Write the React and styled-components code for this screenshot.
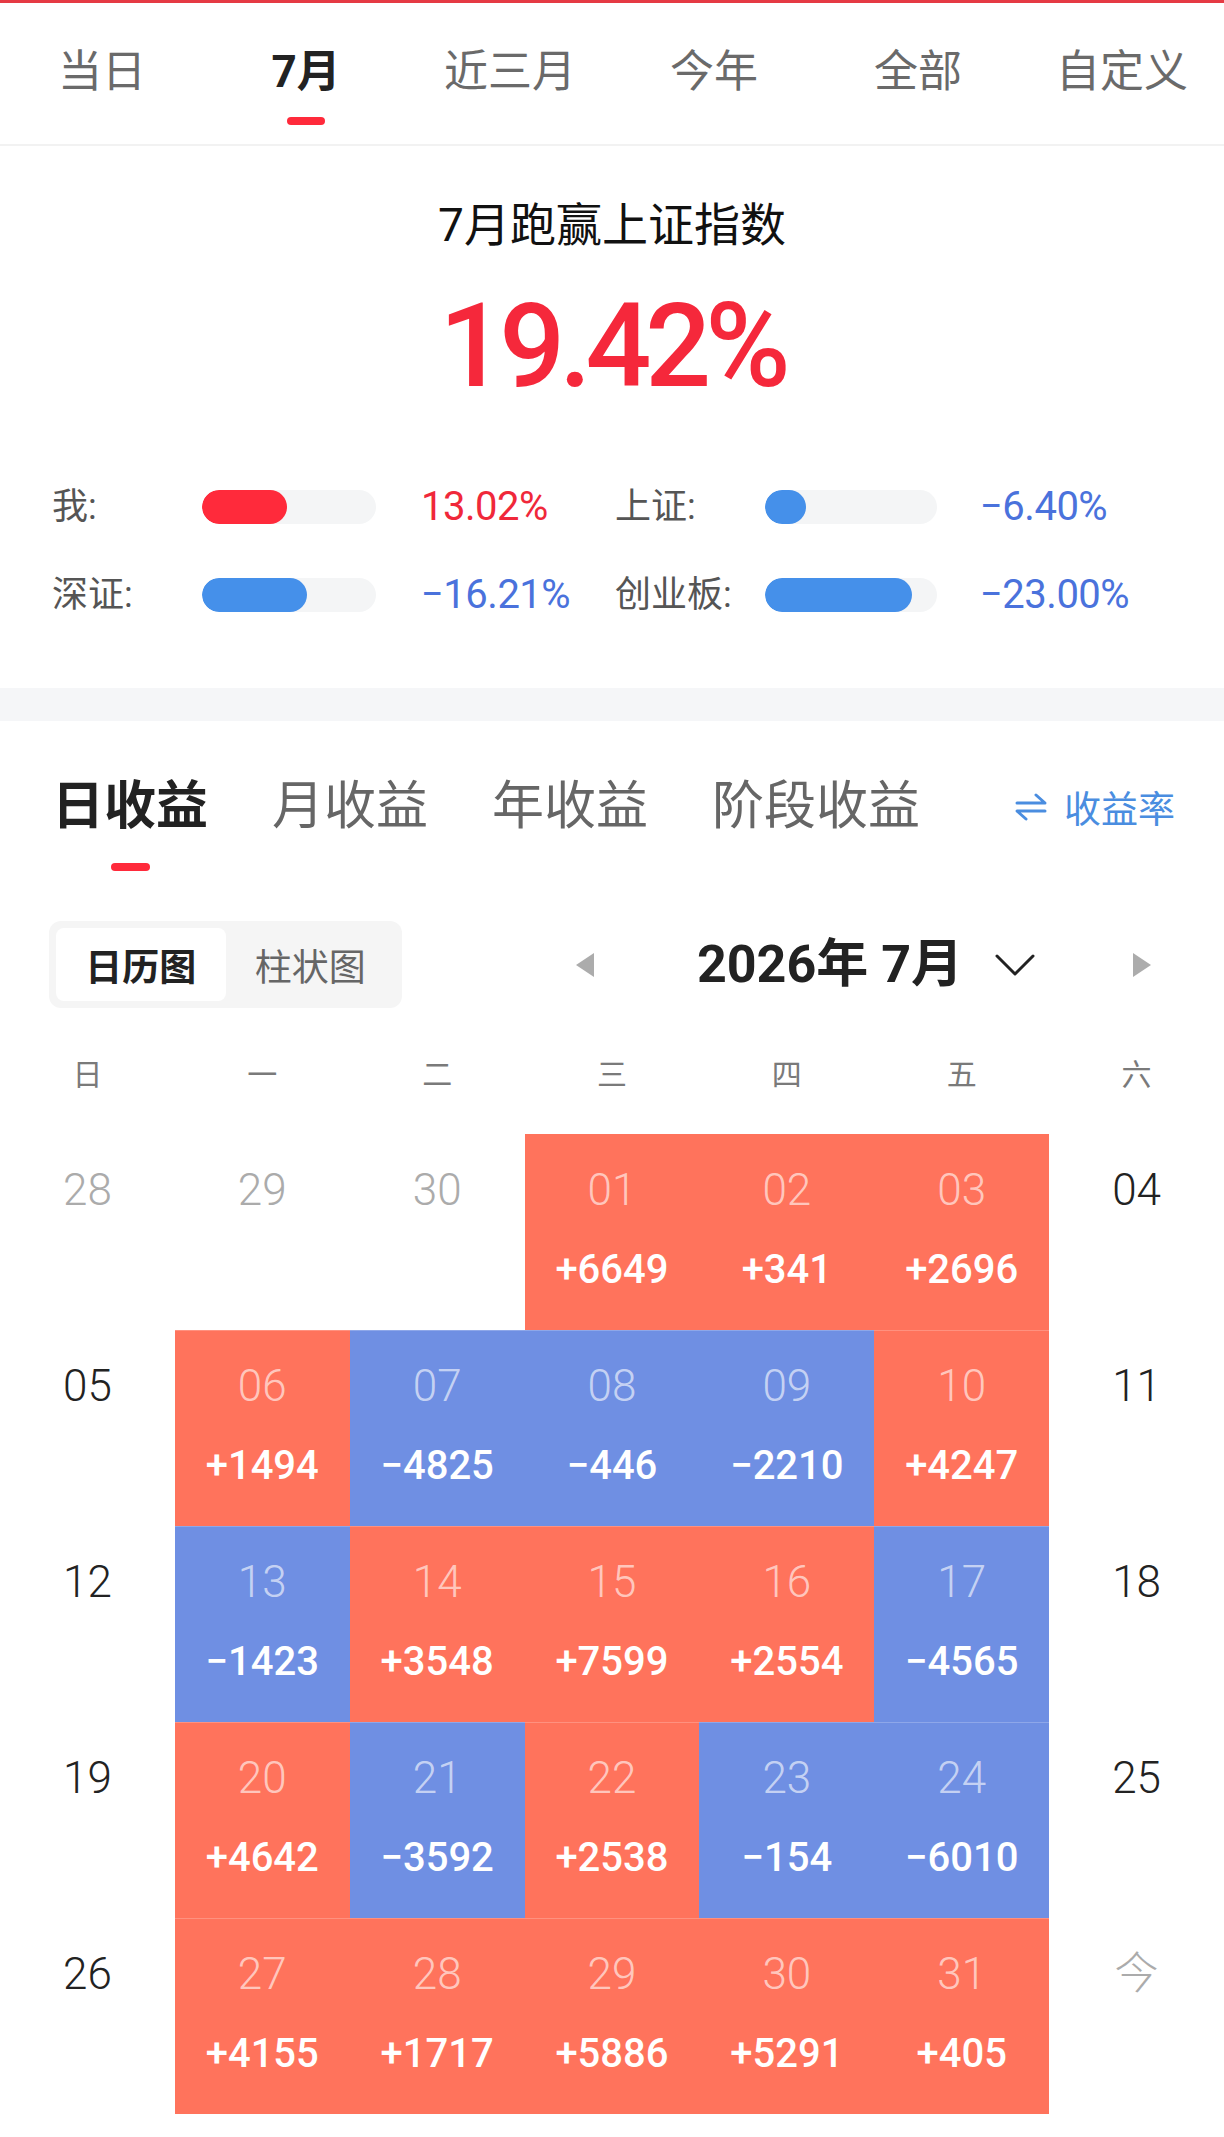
import React from "react";
import styled, { createGlobalStyle } from "styled-components";

const GlobalStyle = createGlobalStyle`
  body {
    margin: 0;
    background: #fff;
  }
`;

const RED = "#ff735c";
const BLUE = "#6f8fe3";

const Page = styled.div`
  width: 1224px;
  background: #fff;
  font-family: Roboto, "Noto Sans CJK SC", sans-serif;
  border-top: 3px solid #e53a44;
`;

const TopTabs = styled.div`
  display: grid;
  grid-template-columns: repeat(6, 1fr);
  height: 141px;
  border-bottom: 2px solid #f2f2f2;
`;

const TopTab = styled.div`
  display: flex;
  flex-direction: column;
  align-items: center;
  padding-top: 47px;
  font-size: 44px;
  line-height: 1;
  color: ${(p) => (p.active ? "#222" : "#6a6a6a")};
  font-weight: ${(p) => (p.active ? 700 : 400)};
`;

const Underline = styled.div`
  width: ${(p) => p.w || 38}px;
  height: 8px;
  border-radius: 4px;
  background: #ff2a3b;
  margin-top: ${(p) => p.gap || 23}px;
`;

const Summary = styled.section`
  padding: 56px 0 63px;
`;

const Title = styled.div`
  text-align: center;
  font-size: 46px;
  line-height: 1;
  font-weight: 400;
  color: #111;
`;

const BigNumber = styled.div`
  margin-top: 40px;
  text-align: center;
  font-size: 116px;
  line-height: 1;
  font-weight: 500;
  letter-spacing: -6px;
  color: #f5283b;
`;

const StatsGrid = styled.div`
  margin-top: 73px;
  padding-left: 52px;
  display: grid;
  grid-template-columns: 563px 563px;
  row-gap: 28px;
`;

const StatItem = styled.div`
  display: flex;
  align-items: center;
  height: 60px;
`;

const StatLabel = styled.div`
  width: 150px;
  font-size: 36px;
  line-height: 1;
  color: #555;
`;

const Track = styled.div`
  width: ${(p) => p.w}px;
  height: 34px;
  border-radius: 17px;
  background: #f4f5f6;
  overflow: hidden;
`;

const Fill = styled.div`
  height: 100%;
  border-radius: 17px;
  background: ${(p) => p.color};
`;

const StatValue = styled.div`
  margin-left: ${(p) => p.gap}px;
  font-size: 40px;
  line-height: 1;
  letter-spacing: -0.5px;
  color: ${(p) => p.color};
`;

const GrayBand = styled.div`
  height: 33px;
  background: #f5f6f8;
`;

const IncomeTabs = styled.div`
  display: flex;
  align-items: flex-start;
  gap: 64px;
  padding: 60px 49px 0 52px;
`;

const IncomeTab = styled.div`
  display: flex;
  flex-direction: column;
  align-items: center;
  font-size: 52px;
  line-height: 1;
  color: ${(p) => (p.active ? "#222" : "#666")};
  font-weight: ${(p) => (p.active ? 700 : 400)};
`;

const RateToggle = styled.div`
  margin-left: auto;
  height: 52px;
  display: flex;
  align-items: center;
  gap: 16px;
  font-size: 37px;
  color: #4a8de0;
`;

const Controls = styled.div`
  margin-top: 50px;
  display: flex;
  align-items: center;
  padding: 0 73px 0 49px;
`;

const Segmented = styled.div`
  width: 353px;
  height: 87px;
  box-sizing: border-box;
  padding: 7px;
  border-radius: 12px;
  background: #f5f5f5;
  display: grid;
  grid-template-columns: 1fr 1fr;
`;

const SegItem = styled.div`
  display: flex;
  align-items: center;
  justify-content: center;
  border-radius: 8px;
  font-size: 37px;
  background: ${(p) => (p.active ? "#fff" : "transparent")};
  color: ${(p) => (p.active ? "#222" : "#666")};
  font-weight: ${(p) => (p.active ? 700 : 400)};
`;

const MonthNav = styled.div`
  margin-left: auto;
  display: flex;
  align-items: center;
`;

const Arrow = styled.div`
  width: 0;
  height: 0;
  border-top: 12px solid transparent;
  border-bottom: 12px solid transparent;
  ${(p) =>
    p.dir === "left"
      ? "border-right: 18px solid #acacac;"
      : "border-left: 18px solid #acacac;"}
`;

const MonthTitle = styled.div`
  margin-left: 103px;
  font-size: 52px;
  line-height: 1;
  font-weight: 700;
  color: #222;
`;

const Chevron = styled.svg`
  margin-left: 31px;
  margin-right: 97px;
`;

const WeekRow = styled.div`
  display: grid;
  grid-template-columns: repeat(7, 1fr);
  padding: 52px 0 44px;
`;

const WeekDay = styled.div`
  text-align: center;
  font-size: 30px;
  line-height: 1;
  color: #7a7a7a;
`;

const Calendar = styled.div`
  display: grid;
  grid-template-columns: repeat(7, 1fr);
  grid-auto-rows: 196px;
  padding-bottom: 23px;
`;

const Cell = styled.div`
  display: flex;
  flex-direction: column;
  align-items: center;
  padding-top: 34px;
  background: ${(p) => p.bg || "transparent"};
  box-shadow: ${(p) =>
    p.bg && p.row > 0 ? "inset 0 1px 0 rgba(255,255,255,0.22)" : "none"};
`;

const DateNum = styled.div`
  font-size: 44px;
  line-height: 1;
  font-weight: 300;
  color: ${(p) => p.color};
`;

const Amount = styled.div`
  margin-top: 38px;
  font-size: 40px;
  line-height: 1;
  font-weight: 500;
  color: #fff;
`;

const topTabs = ["当日", "7月", "近三月", "今年", "全部", "自定义"];
const incomeTabs = ["日收益", "月收益", "年收益", "阶段收益"];
const weekDays = ["日", "一", "二", "三", "四", "五", "六"];

const stats = [
  { label: "我:", w: 174, fill: 85, color: "#ff2a3b", value: "13.02%", vColor: "#f0283a", gap: 45 },
  { label: "上证:", w: 172, fill: 41, color: "#4590ea", value: "−6.40%", vColor: "#4a72dc", gap: 43 },
  { label: "深证:", w: 174, fill: 105, color: "#4590ea", value: "−16.21%", vColor: "#4a72dc", gap: 45 },
  { label: "创业板:", w: 172, fill: 147, color: "#4590ea", value: "−23.00%", vColor: "#4a72dc", gap: 43 },
];

// kind: prev (gray), plain day (black), today, or a traded day with an amount
const days = [
  { d: "28", kind: "prev" }, { d: "29", kind: "prev" }, { d: "30", kind: "prev" },
  { d: "01", v: "+6649" }, { d: "02", v: "+341" }, { d: "03", v: "+2696" }, { d: "04" },
  { d: "05" }, { d: "06", v: "+1494" }, { d: "07", v: "−4825" }, { d: "08", v: "−446" },
  { d: "09", v: "−2210" }, { d: "10", v: "+4247" }, { d: "11" },
  { d: "12" }, { d: "13", v: "−1423" }, { d: "14", v: "+3548" }, { d: "15", v: "+7599" },
  { d: "16", v: "+2554" }, { d: "17", v: "−4565" }, { d: "18" },
  { d: "19" }, { d: "20", v: "+4642" }, { d: "21", v: "−3592" }, { d: "22", v: "+2538" },
  { d: "23", v: "−154" }, { d: "24", v: "−6010" }, { d: "25" },
  { d: "26" }, { d: "27", v: "+4155" }, { d: "28", v: "+1717" }, { d: "29", v: "+5886" },
  { d: "30", v: "+5291" }, { d: "31", v: "+405" }, { d: "今", kind: "today" },
];

function SwapIcon() {
  return (
    <svg width="34" height="30" viewBox="0 0 34 30" fill="none" stroke="#4a8de0" strokeWidth="3" strokeLinecap="round" strokeLinejoin="round">
      <path d="M3 11 H31 L22 3" />
      <path d="M31 19 H3 L12 27" />
    </svg>
  );
}

export default function App() {
  return (
    <Page>
      <GlobalStyle />
      <TopTabs>
        {topTabs.map((t) => (
          <TopTab key={t} active={t === "7月"}>
            {t}
            {t === "7月" && <Underline />}
          </TopTab>
        ))}
      </TopTabs>

      <Summary>
        <Title>7月跑赢上证指数</Title>
        <BigNumber>19.42%</BigNumber>
        <StatsGrid>
          {stats.map((s) => (
            <StatItem key={s.label}>
              <StatLabel>{s.label}</StatLabel>
              <Track w={s.w}>
                <Fill color={s.color} style={{ width: s.fill }} />
              </Track>
              <StatValue gap={s.gap} color={s.vColor}>{s.value}</StatValue>
            </StatItem>
          ))}
        </StatsGrid>
      </Summary>

      <GrayBand />

      <IncomeTabs>
        {incomeTabs.map((t, i) => (
          <IncomeTab key={t} active={i === 0}>
            {t}
            {i === 0 && <Underline w={39} gap={30} />}
          </IncomeTab>
        ))}
        <RateToggle>
          <SwapIcon />
          收益率
        </RateToggle>
      </IncomeTabs>

      <Controls>
        <Segmented>
          <SegItem active>日历图</SegItem>
          <SegItem>柱状图</SegItem>
        </Segmented>
        <MonthNav>
          <Arrow dir="left" />
          <MonthTitle>2026年 7月</MonthTitle>
          <Chevron width="42" height="26" viewBox="0 0 42 26" fill="none" stroke="#222" strokeWidth="3" strokeLinecap="round" strokeLinejoin="round">
            <polyline points="3,4 21,22 39,4" />
          </Chevron>
          <Arrow dir="right" />
        </MonthNav>
      </Controls>

      <WeekRow>
        {weekDays.map((w) => (
          <WeekDay key={w}>{w}</WeekDay>
        ))}
      </WeekRow>

      <Calendar>
        {days.map((c, i) => {
          const row = Math.floor(i / 7);
          if (c.v) {
            const bg = c.v.startsWith("+") ? RED : BLUE;
            return (
              <Cell key={i} bg={bg} row={row}>
                <DateNum color="rgba(255,255,255,0.62)">{c.d}</DateNum>
                <Amount>{c.v}</Amount>
              </Cell>
            );
          }
          const color = c.kind === "prev" || c.kind === "today" ? "#ababab" : "#222";
          return (
            <Cell key={i} row={row}>
              <DateNum color={color}>{c.d}</DateNum>
            </Cell>
          );
        })}
      </Calendar>
    </Page>
  );
}
